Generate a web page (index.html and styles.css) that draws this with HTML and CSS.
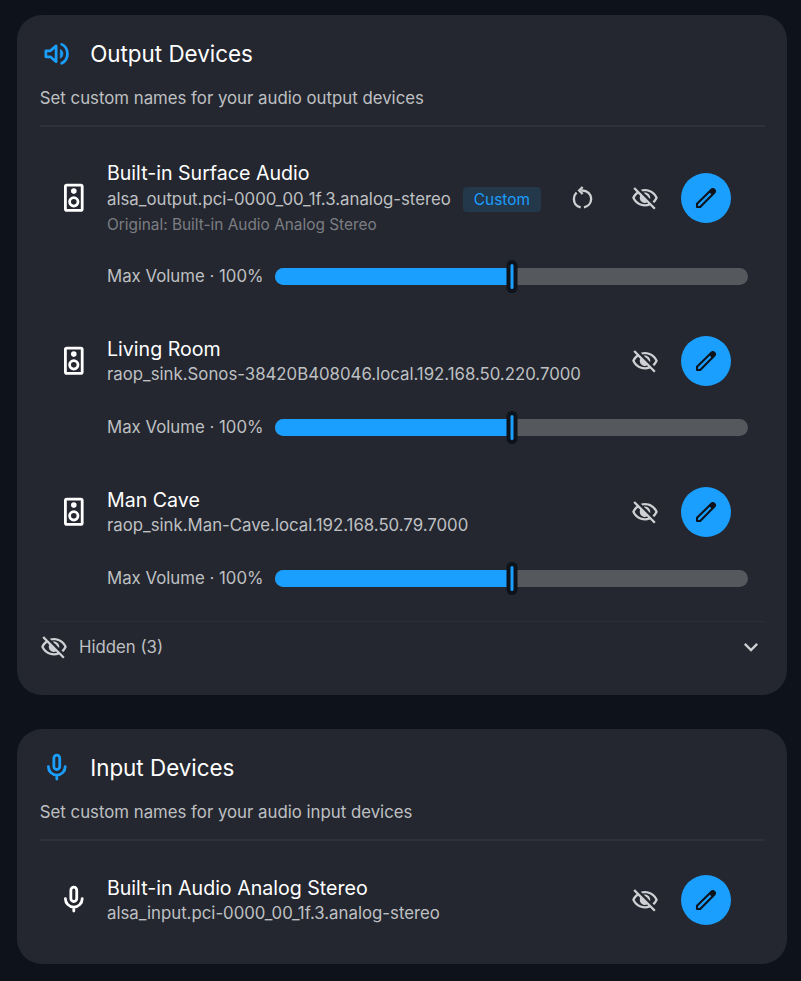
FILE: index.html
```html
<!DOCTYPE html>
<html lang="en">
<head>
  <meta charset="UTF-8">
  <meta name="viewport" content="width=device-width, initial-scale=1.0">
  <title>Audio Devices</title>
  <link rel="stylesheet" href="styles.css">
</head>
<body>
  <!-- Shared icons -->
  <svg class="sprite" xmlns="http://www.w3.org/2000/svg">
    <symbol id="icon-volume" viewBox="-0.3 -0.3 24.6 24.6">
      <path d="M4 9.8h3.3l4.2-3.6v11.6l-4.2-3.6H4z" fill="none" stroke="currentColor" stroke-width="2" stroke-linejoin="round"/>
      <path d="M14.6 8.8c1.3.7 1.900 1.900 1.900 3.200s-.6 2.500-1.900 3.200z" fill="currentColor" stroke="currentColor" stroke-width=".5"/>
      <path d="M15.6 5.100c2.600 1.200 4.200 3.800 4.200 6.900s-1.600 5.700-4.200 6.900" fill="none" stroke="currentColor" stroke-width="2" stroke-linecap="round"/>
    </symbol>
    <symbol id="icon-mic" viewBox="0 0 24 24">
      <rect x="9.9" y="3" width="4.2" height="10.2" rx="2.1" fill="none" stroke="currentColor" stroke-width="2"/>
      <path d="M6 11.2a6 6 0 0 0 12 0M12 17.2V20" fill="none" stroke="currentColor" stroke-width="2" stroke-linecap="round"/>
    </symbol>
    <symbol id="icon-speaker" viewBox="0 0 24 24">
      <rect x="6" y="3" width="12" height="18" rx="1" fill="none" stroke="currentColor" stroke-width="2"/>
      <circle cx="12" cy="7.2" r="2" fill="currentColor"/>
      <circle cx="12" cy="14.9" r="3" fill="none" stroke="currentColor" stroke-width="2"/>
    </symbol>
    <symbol id="icon-restart" viewBox="0.6 0.4 24 24">
      <path d="M10.6 20.4C6.9 19.7 4.8 16.7 4.8 13.1c0-2.2.9-4 2.3-5.4M13.4 20.4c3.700-.7 6.200-3.700 6.200-7.300 0-4.200-3.400-7.100-7.600-7.100h-1" fill="none" stroke="currentColor" stroke-width="2"/>
      <path d="M12.300 3L9.300 6l3 3" fill="none" stroke="currentColor" stroke-width="2"/>
    </symbol>
    <symbol id="icon-hide" viewBox="0 -0.3 24 24">
      <path d="M12 6c3.79 0 7.17 2.13 8.82 5.5-.59 1.22-1.42 2.27-2.41 3.12l1.41 1.41c1.39-1.23 2.49-2.77 3.18-4.53C21.27 7.11 17 4 12 4c-1.27 0-2.49.2-3.64.57l1.65 1.65C10.66 6.09 11.32 6 12 6zm-1.07 1.14L13 9.21c.57.25 1.03.71 1.28 1.28l2.07 2.07c.08-.34.14-.7.14-1.07C16.5 9.01 14.48 7 12 7c-.37 0-.72.05-1.07.14zM2.01 3.87l2.68 2.68C3.06 7.83 1.77 9.53 1 11.5 2.73 15.89 7 19 12 19c1.52 0 2.98-.29 4.32-.82l3.42 3.42 1.41-1.41L3.42 2.45 2.01 3.87zm4.1 4.1l1.75 1.75c-.23.55-.36 1.15-.36 1.78 0 2.48 2.02 4.5 4.5 4.5.63 0 1.23-.13 1.77-.36l.98.98c-.88.24-1.8.38-2.75.38-3.79 0-7.17-2.13-8.82-5.5.7-1.43 1.72-2.61 2.93-3.53z" fill="currentColor"/>
    </symbol>
    <symbol id="icon-edit" viewBox="0 0 24 24">
      <path d="M4.300 17L16.600 4.900c.8-.8 1.700-.8 2.500 0s.8 1.700 0 2.500L7 19.700H4.300z" fill="none" stroke="currentColor" stroke-width="1.800" stroke-linejoin="round"/>
      <path d="M14.300 6.500l2.300-2.300c1-.6 2-.3 2.700.4s1 1.700.4 2.700L17.400 9.600z" fill="currentColor"/>
    </symbol>
    <symbol id="icon-chevron" viewBox="0 0 24 24">
      <path d="M6.700 9.300l5.300 5.300 5.300-5.300" fill="none" stroke="currentColor" stroke-width="2"/>
    </symbol>
  </svg>

  <div class="page">
    <section class="card">
      <div class="card-header">
        <svg class="icon-header"><use href="#icon-volume"/></svg>
        <h2 class="card-title">Output Devices</h2>
      </div>
      <p class="card-subtitle">Set custom names for your audio output devices</p>

      <div class="device-list">
        <div class="device device-renamed">
          <svg class="icon-device"><use href="#icon-speaker"/></svg>
          <div class="device-info">
            <div class="device-name">Built-in Surface Audio</div>
            <div class="device-id">alsa_output.pci-0000_00_1f.3.analog-stereo <span class="badge">Custom</span></div>
            <div class="device-original">Original: Built-in Audio Analog Stereo</div>
          </div>
          <div class="device-actions">
            <button class="icon-btn" aria-label="Reset name"><svg><use href="#icon-restart"/></svg></button>
            <button class="icon-btn" aria-label="Hide device"><svg><use href="#icon-hide"/></svg></button>
            <button class="edit-btn" aria-label="Edit name"><svg><use href="#icon-edit"/></svg></button>
          </div>
        </div>
        <div class="volume">
          <span class="volume-label">Max Volume · 100%</span>
          <div class="slider"><div class="slider-fill"></div><div class="slider-thumb"></div></div>
        </div>

        <div class="device">
          <svg class="icon-device"><use href="#icon-speaker"/></svg>
          <div class="device-info">
            <div class="device-name">Living Room</div>
            <div class="device-id">raop_sink.Sonos-38420B408046.local.192.168.50.220.7000</div>
          </div>
          <div class="device-actions">
            <button class="icon-btn" aria-label="Hide device"><svg><use href="#icon-hide"/></svg></button>
            <button class="edit-btn" aria-label="Edit name"><svg><use href="#icon-edit"/></svg></button>
          </div>
        </div>
        <div class="volume">
          <span class="volume-label">Max Volume · 100%</span>
          <div class="slider"><div class="slider-fill"></div><div class="slider-thumb"></div></div>
        </div>

        <div class="device">
          <svg class="icon-device"><use href="#icon-speaker"/></svg>
          <div class="device-info">
            <div class="device-name">Man Cave</div>
            <div class="device-id">raop_sink.Man-Cave.local.192.168.50.79.7000</div>
          </div>
          <div class="device-actions">
            <button class="icon-btn" aria-label="Hide device"><svg><use href="#icon-hide"/></svg></button>
            <button class="edit-btn" aria-label="Edit name"><svg><use href="#icon-edit"/></svg></button>
          </div>
        </div>
        <div class="volume">
          <span class="volume-label">Max Volume · 100%</span>
          <div class="slider"><div class="slider-fill"></div><div class="slider-thumb"></div></div>
        </div>
      </div>

      <div class="hidden-row">
        <svg class="icon-small"><use href="#icon-hide"/></svg>
        <span class="hidden-label">Hidden (3)</span>
        <svg class="icon-chevron"><use href="#icon-chevron"/></svg>
      </div>
    </section>

    <section class="card card-input">
      <div class="card-header">
        <svg class="icon-header"><use href="#icon-mic"/></svg>
        <h2 class="card-title">Input Devices</h2>
      </div>
      <p class="card-subtitle">Set custom names for your audio input devices</p>

      <div class="device-list">
        <div class="device">
          <svg class="icon-device"><use href="#icon-mic"/></svg>
          <div class="device-info">
            <div class="device-name">Built-in Audio Analog Stereo</div>
            <div class="device-id">alsa_input.pci-0000_00_1f.3.analog-stereo</div>
          </div>
          <div class="device-actions">
            <button class="icon-btn" aria-label="Hide device"><svg><use href="#icon-hide"/></svg></button>
            <button class="edit-btn" aria-label="Edit name"><svg><use href="#icon-edit"/></svg></button>
          </div>
        </div>
      </div>
    </section>
  </div>
</body>
</html>
```
FILE: styles.css
```css
* {
  box-sizing: border-box;
}

body {
  background-color: #0e131b;
  margin: 0;
  font-family: 'Inter', sans-serif;
  color: #ffffff;
}

.sprite {
  display: none;
}

.page {
  display: flex;
  flex-direction: column;
  gap: 34px;
  padding: 15px 13.6px 17px 17.4px;
}

.card {
  height: 680px;
  background: #24272f;
  border-radius: 25px;
  padding: 22px 22.4px;
}

.card-input {
  height: 235px;
}

.card-header {
  display: flex;
  align-items: center;
  gap: 16.8px;
  height: 34px;
}

.icon-header,
.icon-device {
  width: 33.6px;
  height: 33.6px;
  flex-shrink: 0;
}

.icon-header {
  color: #1a9fff;
}

.card-title {
  margin: 0;
  font-size: 22.4px;
  font-weight: 400;
  line-height: 34px;
}

.card-subtitle {
  margin: 0;
  padding: 15px 0 14px;
  border-bottom: 2px solid #2e3139;
  font-size: 16.8px;
  line-height: 25px;
  color: #bfc0c3;
}

.device-list {
  padding: 17px 16.8px 0;
}

.card-input .device-list {
  padding-top: 16.6px;
}

.device {
  display: flex;
  align-items: center;
  height: 84.6px;
}

.device-renamed {
  height: 108.2px;
}

.icon-device {
  margin-right: 16.8px;
}

.device-info {
  flex: 1;
  white-space: nowrap;
}

.device-name {
  font-size: 19.6px;
  line-height: 26px;
}

.device-id {
  display: flex;
  align-items: center;
  font-size: 16.8px;
  line-height: 24px;
  color: #bfc0c3;
}

.device-renamed .device-id {
  line-height: 26px;
}

.badge {
  margin: 1px 0 0 12px;
  padding: 0 11px;
  border-radius: 4px;
  background: #23384b;
  color: #1a9fff;
  font-size: 15.4px;
  line-height: 25px;
}

.device-original {
  font-size: 15.4px;
  line-height: 25px;
  color: #7c7e83;
}

.device-actions {
  display: flex;
  align-items: center;
  padding-right: 16.8px;
}

.icon-btn,
.edit-btn {
  display: flex;
  align-items: center;
  justify-content: center;
  border: 0;
  padding: 0;
  background: none;
}

.icon-btn {
  width: 50.4px;
  height: 50.4px;
  margin-right: 11.2px;
  color: #cfd0d3;
}

.edit-btn {
  width: 50.4px;
  height: 50.4px;
  border-radius: 50%;
  background: #1a9fff;
  color: #0e131b;
}

.icon-btn svg,
.edit-btn svg,
.icon-small {
  width: 28px;
  height: 28px;
}

.volume {
  display: flex;
  align-items: center;
  height: 33.6px;
  margin: 7.2px 0 25.6px 50.4px;
}

.volume-label {
  width: 168px;
  font-size: 16.8px;
  line-height: 22px;
  color: #bfc0c3;
  white-space: nowrap;
}

.slider {
  position: relative;
  flex: 1;
  height: 17px;
  border-radius: 8.5px;
  background: #55585c;
}

.slider-fill {
  width: 50%;
  height: 100%;
  border-radius: 8.5px 0 0 8.5px;
  background: #1a9fff;
}

.slider-thumb {
  position: absolute;
  top: -8px;
  left: 50%;
  width: 11px;
  height: 33px;
  transform: translateX(-50%);
  border: 4px solid #0e131b;
  border-radius: 6px;
  background: #1a9fff;
}

.hidden-row {
  display: flex;
  align-items: center;
  height: 51px;
  border-top: 1px solid #2b2e36;
  color: #cfd0d3;
}

.hidden-label {
  flex: 1;
  margin-left: 11.2px;
  font-size: 16.8px;
  color: #bfc0c3;
}

.icon-chevron {
  width: 28px;
  height: 28px;
}
```
